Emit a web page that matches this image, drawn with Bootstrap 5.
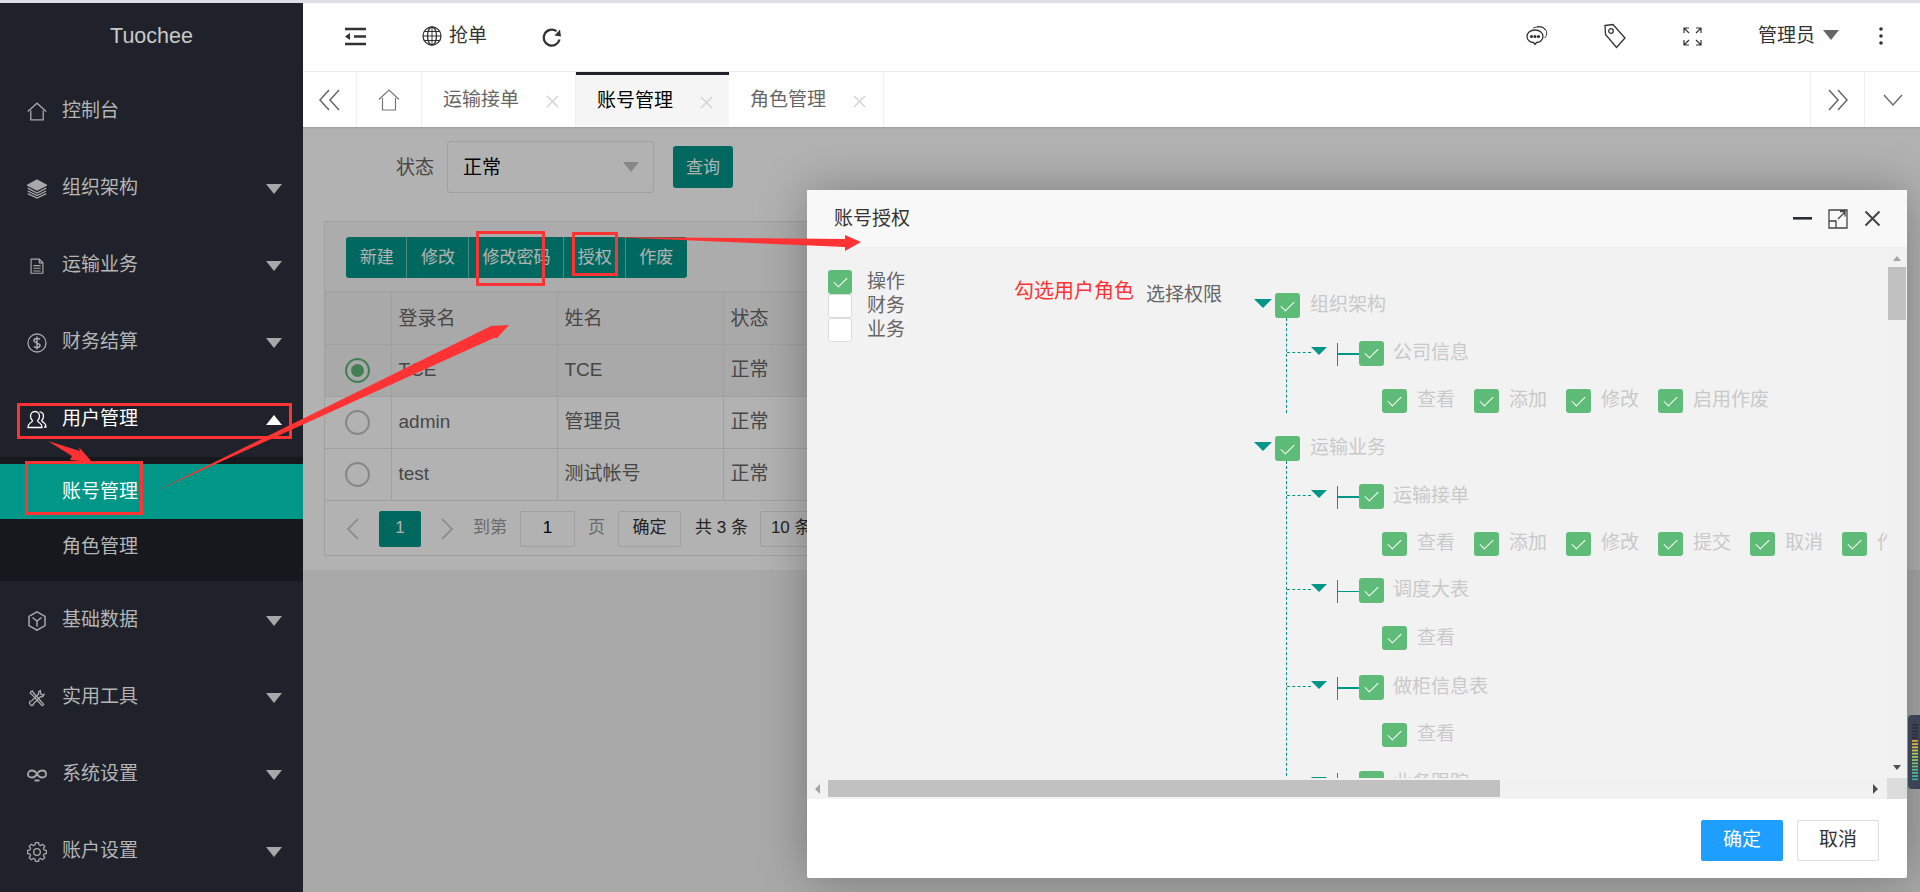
<!DOCTYPE html>
<html lang="zh">
<head>
<meta charset="utf-8">
<title>Tuochee</title>
<link rel="stylesheet" href="https://cdn.jsdelivr.net/npm/bootstrap@5.3.0/dist/css/bootstrap.min.css">
<style>
html,body{height:100%;overflow:hidden}
body{font-family:"Liberation Sans","Noto Sans CJK SC",sans-serif;font-size:19px;line-height:1.3;color:#333;background:#fff}
.tc-strip{height:3px;background:#dedee6;flex:none}
.tc-shell{height:889px}
.tc-side{width:303px;flex:none;background:#1f222b;color:#b5b5b5}
.tc-logo{height:69px;font-size:21.5px;color:#c8c8c8;padding-bottom:1px}
.tc-item{height:77px;padding:2px 21px 0 27px;gap:15px;white-space:nowrap}
.tc-item svg{width:20px;height:20px;flex:none;fill:none;stroke:#a8a8a8;stroke-width:1.3}
.tc-item.tc-open{color:#fff}
.tc-item.tc-open svg{stroke:#fff}
.tc-caret{width:0;height:0;border-left:8.5px solid transparent;border-right:8.5px solid transparent;border-top:10px solid #a8a8a8;margin-left:auto}
.tc-caret.tc-up{border-top:0;border-bottom:10px solid #fff}
.tc-sub{background:#17181d;padding:7px 0}
.tc-subitem{height:55px;padding:2px 0 0 62px}
.tc-subitem.tc-on{background:#009688;color:#fff}
.tc-main{min-width:0}
.tc-head{height:69px;flex:none;border-bottom:1px solid #f0f0f0;padding-bottom:2px;background:#fff}
.tc-head svg{flex:none;fill:none;stroke:#333;stroke-width:1.3}
.tc-tabs{height:55px;flex:none;background:#fff;color:#666;position:relative;z-index:3;box-shadow:0 1px 2px rgba(0,0,0,.12)}
.tc-cell{border-right:1px solid #f0f0f0;height:100%;flex:none;white-space:nowrap}
.tc-cell.tc-txt{padding:2px 0 0 21px}
.tc-x{width:13px;height:13px;margin-left:27px;fill:none;stroke:#cfcfcf;stroke-width:1.2;flex:none;margin-top:1px}
.tc-cell.tc-act{background:#f5f5f5;color:#000;border-top:3px solid #1f222b;border-right:0;padding-top:0}
.tc-cell.tc-act .tc-x{margin-top:3px}
.tc-body{flex:1;position:relative;overflow:hidden;background:#f2f2f2;min-height:0}
.tc-panel{background:#fff;height:443px;padding-top:14px}
.tc-form{margin-left:93px;height:52px;color:#666}
.tc-form span{margin-top:2px}
.tc-select{width:207px;height:52px;margin:0 19px 0 13px;border:1px solid #e6e6e6;border-radius:3px;padding:0 14px 0 15px;color:#000;display:flex;align-items:center;justify-content:space-between}
.tc-tri{width:0;height:0;border-left:8.5px solid transparent;border-right:8.5px solid transparent;border-top:10px solid #c2c2c2}
.tc-btn{background:#009688;color:#fff;border:0;border-radius:3px;font-size:17px;height:42px;width:60px;padding:2px 0 0}
.tc-btn:hover{background:#009688;color:#fff}
.tc-card{margin:28px 21px 0;border:1px solid #e6e6e6;height:335px;width:1575px}
.tc-tool{height:70px;padding:15px 21px;background:#f7f7f7;border-bottom:1px solid #e6e6e6}
.tc-tool .btn-group>.btn{background:#009688;color:#fff;border:0;border-left:1px solid rgba(255,255,255,.45);font-size:17px;height:41px;padding:0 13.7px;border-radius:0;flex:none;margin-left:0}
.tc-tool .btn-group>.btn:first-child{border-left:0;border-radius:3px 0 0 3px}
.tc-tool .btn-group>.btn:last-child{border-radius:0 3px 3px 0}
.tc-table{table-layout:fixed;width:1573px;margin:0;font-size:19px;color:#666;--bs-border-color:#e6e6e6;--bs-table-border-color:#e6e6e6;--bs-table-bg:transparent;--bs-table-color:#666;border-top:0}
.tc-table tr{border-color:#e6e6e6}
.tc-table tr:first-child{border-top:0}
.tc-table td,.tc-table th{height:52px;padding:0 0 0 7px;vertical-align:middle;font-weight:400;border-color:#e6e6e6}
.tc-table th{padding-top:3px}
.tc-table tr>*:first-child{border-left:0;padding:0 0 0 20px}
.tc-table tr:first-child>*{border-top:0}
.tc-table .tc-grey>*{background:#f2f2f2}
.tc-radio{width:25px;height:25px;border:2px solid #c2c2c2;border-radius:50%}
.tc-radio.tc-sel{border-color:#5fb878}
.tc-radio.tc-sel i{width:13px;height:13px;border-radius:50%;background:#5fb878;display:block}
.tc-pager{height:56px;font-size:17px;color:#999;padding-left:21px}
.tc-pager svg{width:14px;height:22px;fill:none;stroke:#c2c2c2;stroke-width:1.5;flex:none}
.tc-pg{width:42px;height:36px;background:#009688;color:#fff;border-radius:2px;margin:0 19px 0 19px;flex:none}
.tc-inp{height:36px;border:1px solid #e6e6e6;border-radius:2px;color:#000;flex:none}
.tc-mask{position:absolute;inset:0;background:rgba(0,0,0,.3)}
.tc-modal{position:absolute;left:504px;top:63px;width:1100px;height:688px;background:#fff;box-shadow:1px 1px 50px rgba(0,0,0,.3);border-radius:2px;z-index:2}
.tc-mtitle{height:58px;flex:none;background:#f8f8f8;border-bottom:1px solid #eee;padding:0 26px 0 27px;color:#333;position:relative}
.tc-mtitle>span{margin-top:2px}
.tc-mbody{flex:1;min-height:0;display:grid;grid-template-columns:1fr 20px;grid-template-rows:1fr 21px;background:#f2f2f2}
.tc-view{overflow:hidden;padding-left:21px;min-height:0;min-width:0}
.tc-roles{width:318px;flex:none;padding-top:22px;color:#666}
.tc-role{height:24px;gap:15px}
.tc-ck{width:25px;height:25px;background:#5fbb78;border-radius:3px;flex:none;display:flex;align-items:center;justify-content:center}
.tc-ck::after{content:"";width:7px;height:13px;border:solid #fff;border-width:0 1.5px 1.5px 0;transform:rotate(45deg);margin-top:-3px}
.tc-role .tc-ck{width:24px;height:24px}
.tc-ck.tc-off{background:#fff;border:1px solid #dcdcdc}
.tc-ck.tc-off::after{display:none}
.tc-perm{width:108px;flex:none;padding-top:35px;color:#666;white-space:nowrap}
.tc-tree{flex:none;padding-top:45px;color:#c9c9c9;white-space:nowrap}
.tc-root{height:25px;gap:0}
.tc-tt{width:0;height:0;border-left:9px solid transparent;border-right:9px solid transparent;border-top:9px solid #009688;margin-right:3px;margin-top:-4px;flex:none}
.tc-root .tc-ck{margin-right:10px}
.tc-kids{margin-left:32px;border-left:1px dashed #009688;padding-top:22.5px;margin-bottom:23.5px}
.tc-child{height:25px;margin-bottom:23px}
.tc-dash{width:24px;border-top:1px dashed #009688;flex:none;margin-top:-2px}
.tc-tt2{width:0;height:0;border-left:8.5px solid transparent;border-right:8.5px solid transparent;border-top:8px solid #009688;margin-top:-5px;flex:none}
.tc-bar{width:22px;height:23px;margin-left:10px;border-left:1.5px solid #009688;flex:none;display:flex;align-items:center;margin-top:2px}
.tc-bar i{display:block;width:100%;height:1.5px;background:#009688}
.tc-child .tc-ck{margin-right:9px}
.tc-leaf{height:24px;margin:0 0 24.5px 95px}
.tc-leaf:last-child{margin-bottom:0}
.tc-perm-i{width:92px;flex:none;gap:10px}
.tc-leaf .tc-ck{height:24px}
.tc-vbar{background:#f1f1f1;padding:8px 1px 8px 1px;color:#a3a3a3}
.tc-thumb{background:#c1c1c1}
.tc-vthumb{height:53px;margin-top:6px}
.tc-au{width:0;height:0;border-left:4.5px solid transparent;border-right:4.5px solid transparent;border-bottom:5px solid #a3a3a3;margin:0 auto}
.tc-ad{width:0;height:0;border-left:4.5px solid transparent;border-right:4.5px solid transparent;border-top:5px solid #505050;margin:auto auto 0}
.tc-hbar{background:#f1f1f1;padding:2px 0 2px 8px}
.tc-al{width:0;height:0;border-top:5px solid transparent;border-bottom:5px solid transparent;border-right:5px solid #a3a3a3;flex:none}
.tc-hthumb{width:672px;height:17px;margin-left:8px;flex:none}
.tc-ar{width:0;height:0;border-top:5px solid transparent;border-bottom:5px solid transparent;border-left:5px solid #505050;margin-left:373px;flex:none}
.tc-corner{background:#dcdcdc}
.tc-mfoot{height:79px;flex:none;gap:14px;padding:4px 28px 0 0}
.tc-ok,.tc-no{width:82px;height:41px;font-size:19px;border-radius:2px;padding:0}
.tc-ok{background:#1e9fff;color:#fff;border:0}
.tc-ok:hover{background:#1e9fff;color:#fff}
.tc-no{background:#fff;color:#333;border:1px solid #dedede}
.tc-notes{position:absolute;left:0;top:0;width:1920px;height:892px;z-index:10;pointer-events:none}
.tc-redtxt{position:absolute;left:1014px;top:278px;z-index:11;color:#f33;font-size:20px;white-space:nowrap}
.tc-meter{position:absolute;right:0;top:715px;width:12px;height:74px;z-index:9}
</style>
</head>
<body>
<div class="tc-strip"></div>
<div class="d-flex tc-shell">
  <aside class="tc-side d-flex flex-column">
    <div class="tc-logo d-flex align-items-center justify-content-center">Tuochee</div>
    <div class="tc-item d-flex align-items-center"><svg viewBox="0 0 20 20"><path d="M.8 9.600 10 1.200l9.200 8.400M3.800 8.500v9.400h12.400V8.500"/></svg><span>控制台</span></div>
    <div class="tc-item d-flex align-items-center"><svg viewBox="0 0 20 20"><path d="M10 1 19.500 6.300 10 11 .5 6.300z" fill="#a8a8a8"/><path d="M.8 9.200 10 14l9.200-4.800M.8 12 10 16.500 19.200 12M.8 14.600 10 19l9.200-4.400"/></svg><span>组织架构</span><i class="tc-caret"></i></div>
    <div class="tc-item d-flex align-items-center"><svg viewBox="-1 -1 22 22"><path d="M3.500 2.500h9l4 4v11.500h-13zM12.500 2.500v4h4M6 9.500h8M6 12.500h8M6 15.500h8"/></svg><span>运输业务</span><i class="tc-caret"></i></div>
    <div class="tc-item d-flex align-items-center"><svg viewBox="0 0 20 20"><circle cx="10" cy="10" r="9"/><path d="M13 6.500C12 5 7 5 7 7.500c0 3 6 2 6 5 0 2.500-5 2.500-6 1M10 3.500v13" stroke-width="1.500"/></svg><span>财务结算</span><i class="tc-caret"></i></div>
    <div class="tc-item tc-open d-flex align-items-center"><svg viewBox="0 0 20 20"><path d="M8 1.500c-2.800 0-4.500 2.200-4.500 4.800 0 1.900.9 3.500 2 4.400.2 1-1 1.700-2.500 2.500-1.400.8-2 2.500-2 4.300h14c0-1.800-.6-3.500-2-4.300-1.500-.8-2.700-1.500-2.500-2.500 1.100-.9 2-2.500 2-4.400 0-2.600-1.700-4.800-4.500-4.800z"/><path d="M12.500 1.800c2.500.2 4 2.200 4 4.500 0 1.800-.8 3.300-1.800 4.200 0 1 1.300 1.600 2.300 2.300 1.300.8 2 2.200 2 4.200h-2"/></svg><span>用户管理</span><i class="tc-caret tc-up"></i></div>
    <div class="tc-sub">
      <div class="tc-subitem tc-on d-flex align-items-center">账号管理</div>
      <div class="tc-subitem d-flex align-items-center">角色管理</div>
    </div>
    <div class="tc-item d-flex align-items-center"><svg viewBox="0 0 20 20"><path d="M10 .8 18 5.400v9.200l-8 4.600-8-4.600V5.400zM5.500 6.500 10 10l4.500-3.500M10 10v5.500" stroke-width="1.500"/></svg><span>基础数据</span><i class="tc-caret"></i></div>
    <div class="tc-item d-flex align-items-center"><svg viewBox="-2 -2 24 24"><path d="M2.500 2.500l1.800-1 1.700 2.500L16.500 16c1 .5 1.500 1 1.500 2l-1.500 1c-1 0-1.500-1-2-1.500L4.200 6 2 4.300z" stroke-width="1.600"/><path d="M14 1c-2 1-2.500 3-2 4.300L3.500 13.500C2 13.500 1 14.500 1 16l2 3c1.500 0 3-1 3-2.500L14 8.500c1.800.5 4 0 4.500-3l-2.300 1L14.500 5z" stroke-width="1.600"/></svg><span>实用工具</span><i class="tc-caret"></i></div>
    <div class="tc-item d-flex align-items-center"><svg viewBox="0 0 20 20"><path d="M10 8.500C8.500 6.500 7 5.500 5 5.500c-2.500 0-4 1.700-4 3.500s1.500 3.500 4 3.500c2 0 3.500-1 5-3.500 1.500 2.500 3 3.500 5 3.500 2.500 0 4-1.700 4-3.500s-1.500-3.500-4-3.500c-2 0-3.500 1-5 3M7.500 15.500h5" stroke-width="1.800"/></svg><span>系统设置</span><i class="tc-caret"></i></div>
    <div class="tc-item d-flex align-items-center"><svg viewBox="0 0 20 20"><circle cx="10" cy="10" r="3.300"/><polygon transform="translate(10 10)" points="7.11,-2.04 9.48,-1.5 9.48,1.5 7.11,2.04 6.47,3.59 7.77,5.64 5.64,7.77 3.59,6.47 2.04,7.11 1.5,9.48 -1.5,9.48 -2.04,7.11 -3.59,6.47 -5.64,7.77 -7.77,5.64 -6.47,3.59 -7.11,2.04 -9.48,1.5 -9.48,-1.5 -7.11,-2.04 -6.47,-3.59 -7.77,-5.64 -5.64,-7.77 -3.59,-6.47 -2.04,-7.11 -1.5,-9.48 1.5,-9.48 2.04,-7.11 3.59,-6.47 5.64,-7.77 7.77,-5.64 6.47,-3.59"/></svg><span>账户设置</span><i class="tc-caret"></i></div>
  </aside>
  <main class="tc-main flex-grow-1 d-flex flex-column">
    <header class="tc-head d-flex align-items-center">
      <svg style="margin-left:42px" width="21" height="19" viewBox="0 0 21 19"><path d="M0 2h21M9 9.500h12M0 17h21" stroke-width="2.500"/><path d="M5 6v7L0 9.500z" fill="#333" stroke="none"/></svg>
      <svg style="margin-left:56px" width="20" height="20" viewBox="0 0 20 20"><circle cx="10" cy="10" r="9"/><ellipse cx="10" cy="10" rx="4.500" ry="9"/><path d="M10 1v18M1 10h18M2.200 5.500h15.600M2.200 14.500h15.600" stroke-width="1"/></svg>
      <span style="margin-left:7px">抢单</span>
      <svg style="margin-left:54px;margin-top:3px" width="22" height="22" viewBox="0 0 22 22"><path d="M18.500 12.500A8 8 0 1 1 15.500 4.200" stroke-width="2.300"/><path d="M13.500 8.500 20 9.500 19 2.500z" fill="#333" stroke="none"/></svg>
      <div class="ms-auto d-flex align-items-center">
        <svg width="24" height="24" viewBox="0 0 24 24"><path d="M10 6C5 6 2 9 2 12.500c0 3.300 3 6 6.500 6l1.500 2 1.500-2c3.500-.2 6.500-2.700 6.500-6C18 9 15 6 10 6z"/><path d="M8 4.200C12 2 20 2 21.500 7.500c.7 2.500-.3 5-2 6.500M12 3C15 2 19 3 20 6" stroke-width="1"/><circle cx="6.500" cy="12.500" r=".9" fill="#333"/><circle cx="10" cy="12.500" r=".9" fill="#333"/><circle cx="13.500" cy="12.500" r=".9" fill="#333"/></svg>
        <svg style="margin-left:54px" width="24" height="26" viewBox="0 0 24 26"><path d="M2 2.500 10 1.500 22 15l-8.500 9.500L2.500 11.500z"/><circle cx="8" cy="8" r="2.300"/></svg>
        <svg style="margin-left:55.500px" width="19" height="19" viewBox="0 0 19 19"><path d="M1 6V1h5M1 1l5 5M18 6V1h-5M18 1l-5 5M1 13v5h5M1 18l5-5M18 13v5h-5M18 18l-5-5" stroke-width="1.200"/></svg>
        <span style="margin-left:56px">管理员</span>
        <i class="tc-tri" style="border-top-color:#666;margin-left:8px;margin-top:-2px"></i>
        <svg style="margin-left:40px;margin-right:37px" width="4" height="18" viewBox="0 0 4 18"><circle cx="2" cy="2" r="1.800" fill="#333" stroke="none"/><circle cx="2" cy="9" r="1.800" fill="#333" stroke="none"/><circle cx="2" cy="16" r="1.800" fill="#333" stroke="none"/></svg>
      </div>
    </header>
    <nav class="tc-tabs d-flex align-items-center">
      <div class="tc-cell d-flex align-items-center justify-content-center" style="width:54px"><svg width="21" height="22" viewBox="0 0 21 22" fill="none" stroke="#666" stroke-width="1.500"><path d="M10 1 1 11l9 10M20 1l-9 10 9 10"/></svg></div>
      <div class="tc-cell d-flex align-items-center justify-content-center" style="width:65px"><svg width="22" height="22" viewBox="0 0 22 22" fill="none" stroke="#777" stroke-width="1.200"><path d="M1 10.500 11 1l10 9.500M4.500 9v12h13V9"/></svg></div>
      <div class="tc-cell tc-txt d-flex align-items-center" style="width:154px">运输接单<svg class="tc-x" viewBox="0 0 13 13"><path d="M1 1l11 11M12 1 1 12"/></svg></div>
      <div class="tc-cell tc-txt tc-act d-flex align-items-center" style="width:153px">账号管理<svg class="tc-x" viewBox="0 0 13 13"><path d="M1 1l11 11M12 1 1 12"/></svg></div>
      <div class="tc-cell tc-txt d-flex align-items-center" style="width:155px">角色管理<svg class="tc-x" viewBox="0 0 13 13"><path d="M1 1l11 11M12 1 1 12"/></svg></div>
      <div class="flex-grow-1"></div>
      <div class="tc-cell d-flex align-items-center justify-content-center" style="width:55px;border-left:1px solid #f0f0f0"><svg width="20" height="22" viewBox="0 0 20 22" fill="none" stroke="#666" stroke-width="1.500"><path d="M1 1l9 10-9 10M10 1l9 10-9 10"/></svg></div>
      <div class="tc-cell d-flex align-items-center justify-content-center" style="width:55px;border-right:0"><svg width="20" height="12" viewBox="0 0 20 12" fill="none" stroke="#666" stroke-width="1.300"><path d="M1 1l9 10 9-10"/></svg></div>
    </nav>
    <section class="tc-body">
      <div class="tc-panel">
        <div class="tc-form d-flex align-items-center">
          <span>状态</span>
          <div class="tc-select"><span>正常</span><i class="tc-tri"></i></div>
          <button class="btn tc-btn" type="button">查询</button>
        </div>
        <div class="tc-card">
          <div class="tc-tool"><div class="btn-group"><button class="btn" type="button">新建</button><button class="btn" type="button">修改</button><button class="btn" type="button">修改密码</button><button class="btn" type="button">授权</button><button class="btn" type="button">作废</button></div></div>
          <table class="table table-bordered tc-table">
            <colgroup><col style="width:66px"><col style="width:166px"><col style="width:166px"><col style="width:166px"><col></colgroup>
            <tr class="tc-grey"><th></th><th>登录名</th><th>姓名</th><th>状态</th><th></th></tr>
            <tr class="tc-grey"><td><div class="tc-radio tc-sel d-flex align-items-center justify-content-center"><i></i></div></td><td>TCE</td><td>TCE</td><td>正常</td><td></td></tr>
            <tr><td><div class="tc-radio"></div></td><td>admin</td><td>管理员</td><td>正常</td><td></td></tr>
            <tr><td><div class="tc-radio"></div></td><td>test</td><td>测试帐号</td><td>正常</td><td></td></tr>
          </table>
          <div class="tc-pager d-flex align-items-center">
            <svg viewBox="0 0 14 22"><path d="M12 1 2 11l10 10"/></svg>
            <div class="tc-pg d-flex align-items-center justify-content-center">1</div>
            <svg viewBox="0 0 14 22"><path d="M2 1l10 10L2 21"/></svg>
            <span style="margin-left:19px">到第</span>
            <div class="tc-inp d-flex align-items-center justify-content-center" style="width:55px;margin-left:13px">1</div>
            <span style="margin-left:13px">页</span>
            <div class="tc-inp d-flex align-items-center justify-content-center" style="width:63px;margin-left:13px;color:#333">确定</div>
            <span style="margin-left:14px;color:#333">共 3 条</span>
            <div class="tc-inp d-flex align-items-center" style="width:120px;margin-left:12px;padding-left:10px;color:#333">10 条/页</div>
          </div>
        </div>
      </div>
      <div class="tc-mask"></div>
      <div class="tc-modal d-flex flex-column">
        <div class="tc-mtitle d-flex align-items-center">
          <span>账号授权</span>
          <div class="ms-auto d-flex align-items-center">
            <svg width="19" height="3" viewBox="0 0 19 3"><rect width="19" height="2.600" fill="#2d2d3a"/></svg>
            <svg class="ms-3" width="20" height="20" viewBox="0 0 20 20" fill="none" stroke="#444" stroke-width="1.300"><path d="M7.500 1H1v18h18V1zM1 12h7v7M10 10l7-7M12 2.500h5v5"/></svg>
            <svg class="ms-3" width="17" height="17" viewBox="0 0 17 17" fill="none" stroke="#444" stroke-width="2"><path d="M1.500 1.500l14 14M15.500 1.500l-14 14"/></svg>
          </div>
        </div>
        <div class="tc-mbody">
          <div class="tc-view d-flex">
            <div class="tc-roles">
              <div class="tc-role d-flex align-items-center"><i class="tc-ck"></i><span>操作</span></div>
              <div class="tc-role d-flex align-items-center"><i class="tc-ck tc-off"></i><span>财务</span></div>
              <div class="tc-role d-flex align-items-center"><i class="tc-ck tc-off"></i><span>业务</span></div>
            </div>
            <div class="tc-perm">选择权限</div>
            <div class="tc-tree">
              <div class="tc-root d-flex align-items-center"><i class="tc-tt"></i><i class="tc-ck"></i><span>组织架构</span></div>
              <div class="tc-kids">
                <div class="tc-child d-flex align-items-center"><i class="tc-dash"></i><i class="tc-tt2"></i><i class="tc-bar"><i></i></i><i class="tc-ck"></i><span>公司信息</span></div>
                <div class="tc-leaf d-flex align-items-center">
                  <div class="tc-perm-i d-flex align-items-center"><i class="tc-ck"></i><span>查看</span></div>
                  <div class="tc-perm-i d-flex align-items-center"><i class="tc-ck"></i><span>添加</span></div>
                  <div class="tc-perm-i d-flex align-items-center"><i class="tc-ck"></i><span>修改</span></div>
                  <div class="tc-perm-i d-flex align-items-center"><i class="tc-ck"></i><span>启用作废</span></div>
                </div>
              </div>
              <div class="tc-root d-flex align-items-center"><i class="tc-tt"></i><i class="tc-ck"></i><span>运输业务</span></div>
              <div class="tc-kids">
                <div class="tc-child d-flex align-items-center"><i class="tc-dash"></i><i class="tc-tt2"></i><i class="tc-bar"><i></i></i><i class="tc-ck"></i><span>运输接单</span></div>
                <div class="tc-leaf d-flex align-items-center" style="margin-bottom:22.5px">
                  <div class="tc-perm-i d-flex align-items-center"><i class="tc-ck"></i><span>查看</span></div>
                  <div class="tc-perm-i d-flex align-items-center"><i class="tc-ck"></i><span>添加</span></div>
                  <div class="tc-perm-i d-flex align-items-center"><i class="tc-ck"></i><span>修改</span></div>
                  <div class="tc-perm-i d-flex align-items-center"><i class="tc-ck"></i><span>提交</span></div>
                  <div class="tc-perm-i d-flex align-items-center"><i class="tc-ck"></i><span>取消</span></div>
                  <div class="tc-perm-i d-flex align-items-center"><i class="tc-ck"></i><span>作废</span></div>
                </div>
                <div class="tc-child d-flex align-items-center"><i class="tc-dash"></i><i class="tc-tt2"></i><i class="tc-bar"><i></i></i><i class="tc-ck"></i><span>调度大表</span></div>
                <div class="tc-leaf d-flex align-items-center" style="margin-bottom:24.5px"><div class="tc-perm-i d-flex align-items-center"><i class="tc-ck"></i><span>查看</span></div></div>
                <div class="tc-child d-flex align-items-center"><i class="tc-dash"></i><i class="tc-tt2"></i><i class="tc-bar"><i></i></i><i class="tc-ck"></i><span>做柜信息表</span></div>
                <div class="tc-leaf d-flex align-items-center" style="margin-bottom:24.5px"><div class="tc-perm-i d-flex align-items-center"><i class="tc-ck"></i><span>查看</span></div></div>
                <div class="tc-child d-flex align-items-center"><i class="tc-dash"></i><i class="tc-tt2"></i><i class="tc-bar"><i></i></i><i class="tc-ck"></i><span>业务跟踪</span></div>
              </div>
            </div>
          </div>
          <div class="tc-vbar d-flex flex-column">
            <i class="tc-au"></i>
            <div class="tc-thumb tc-vthumb"></div>
            <i class="tc-ad"></i>
          </div>
          <div class="tc-hbar d-flex align-items-center">
            <i class="tc-al"></i>
            <div class="tc-thumb tc-hthumb"></div>
            <i class="tc-ar"></i>
          </div>
          <div class="tc-corner"></div>
        </div>
        <div class="tc-mfoot d-flex align-items-center justify-content-end">
          <button class="btn tc-ok" type="button">确定</button>
          <button class="btn tc-no" type="button">取消</button>
        </div>
      </div>
    </section>
  </main>
</div>
<svg class="tc-notes" viewBox="0 0 1920 892">
  <g fill="none" stroke="#f33" stroke-width="3">
    <rect x="18.500" y="404.500" width="272" height="33"/>
    <rect x="26.500" y="462.500" width="115" height="51"/>
    <rect x="477.500" y="232.500" width="66" height="52"/>
    <rect x="573.500" y="233.500" width="43" height="41"/>
  </g>
  <g fill="#f33">
    <path d="M154 492 487 328 491 326 509 325 497 338 494 338z"/>
    <path d="M48 441 80 451 79 447 92 462 70 460 72 456z"/>
    <path d="M609 237 845 239 845 235 861 242 845 251 845 247z"/>
  </g>
</svg>
<div class="tc-redtxt">勾选用户角色</div>
<svg class="tc-meter" viewBox="0 0 12 74">
  <path d="M12 0H4Q0 0 0 4V70Q0 74 4 74H12z" fill="#3b4354"/>
  <g>
    <rect x="4" y="9" width="6" height="1.800" fill="#2c303a"/><rect x="4" y="12.200" width="6" height="1.800" fill="#2c303a"/><rect x="4" y="15.400" width="6" height="1.800" fill="#2c303a"/><rect x="4" y="18.600" width="6" height="1.800" fill="#2c303a"/><rect x="4" y="21.800" width="6" height="1.800" fill="#2c303a"/>
    <rect x="4" y="25" width="6" height="1.800" fill="#d9a33c"/><rect x="4" y="28.200" width="6" height="1.800" fill="#d6b140"/><rect x="4" y="31.400" width="6" height="1.800" fill="#cfc04a"/><rect x="4" y="34.600" width="6" height="1.800" fill="#c3c84f"/><rect x="4" y="37.800" width="6" height="1.800" fill="#b2c95a"/><rect x="4" y="41" width="6" height="1.800" fill="#9fc762"/><rect x="4" y="44.200" width="6" height="1.800" fill="#8dc46a"/><rect x="4" y="47.400" width="6" height="1.800" fill="#7bc073"/><rect x="4" y="50.600" width="6" height="1.800" fill="#6bbd7d"/><rect x="4" y="53.800" width="6" height="1.800" fill="#5bb987"/><rect x="4" y="57" width="6" height="1.800" fill="#4db592"/><rect x="4" y="60.200" width="6" height="1.800" fill="#3fb29d"/><rect x="4" y="63.400" width="6" height="1.800" fill="#32aea7"/>
  </g>
</svg>
<script src="https://cdn.jsdelivr.net/npm/bootstrap@5.3.0/dist/js/bootstrap.bundle.min.js"></script>
</body>
</html>
